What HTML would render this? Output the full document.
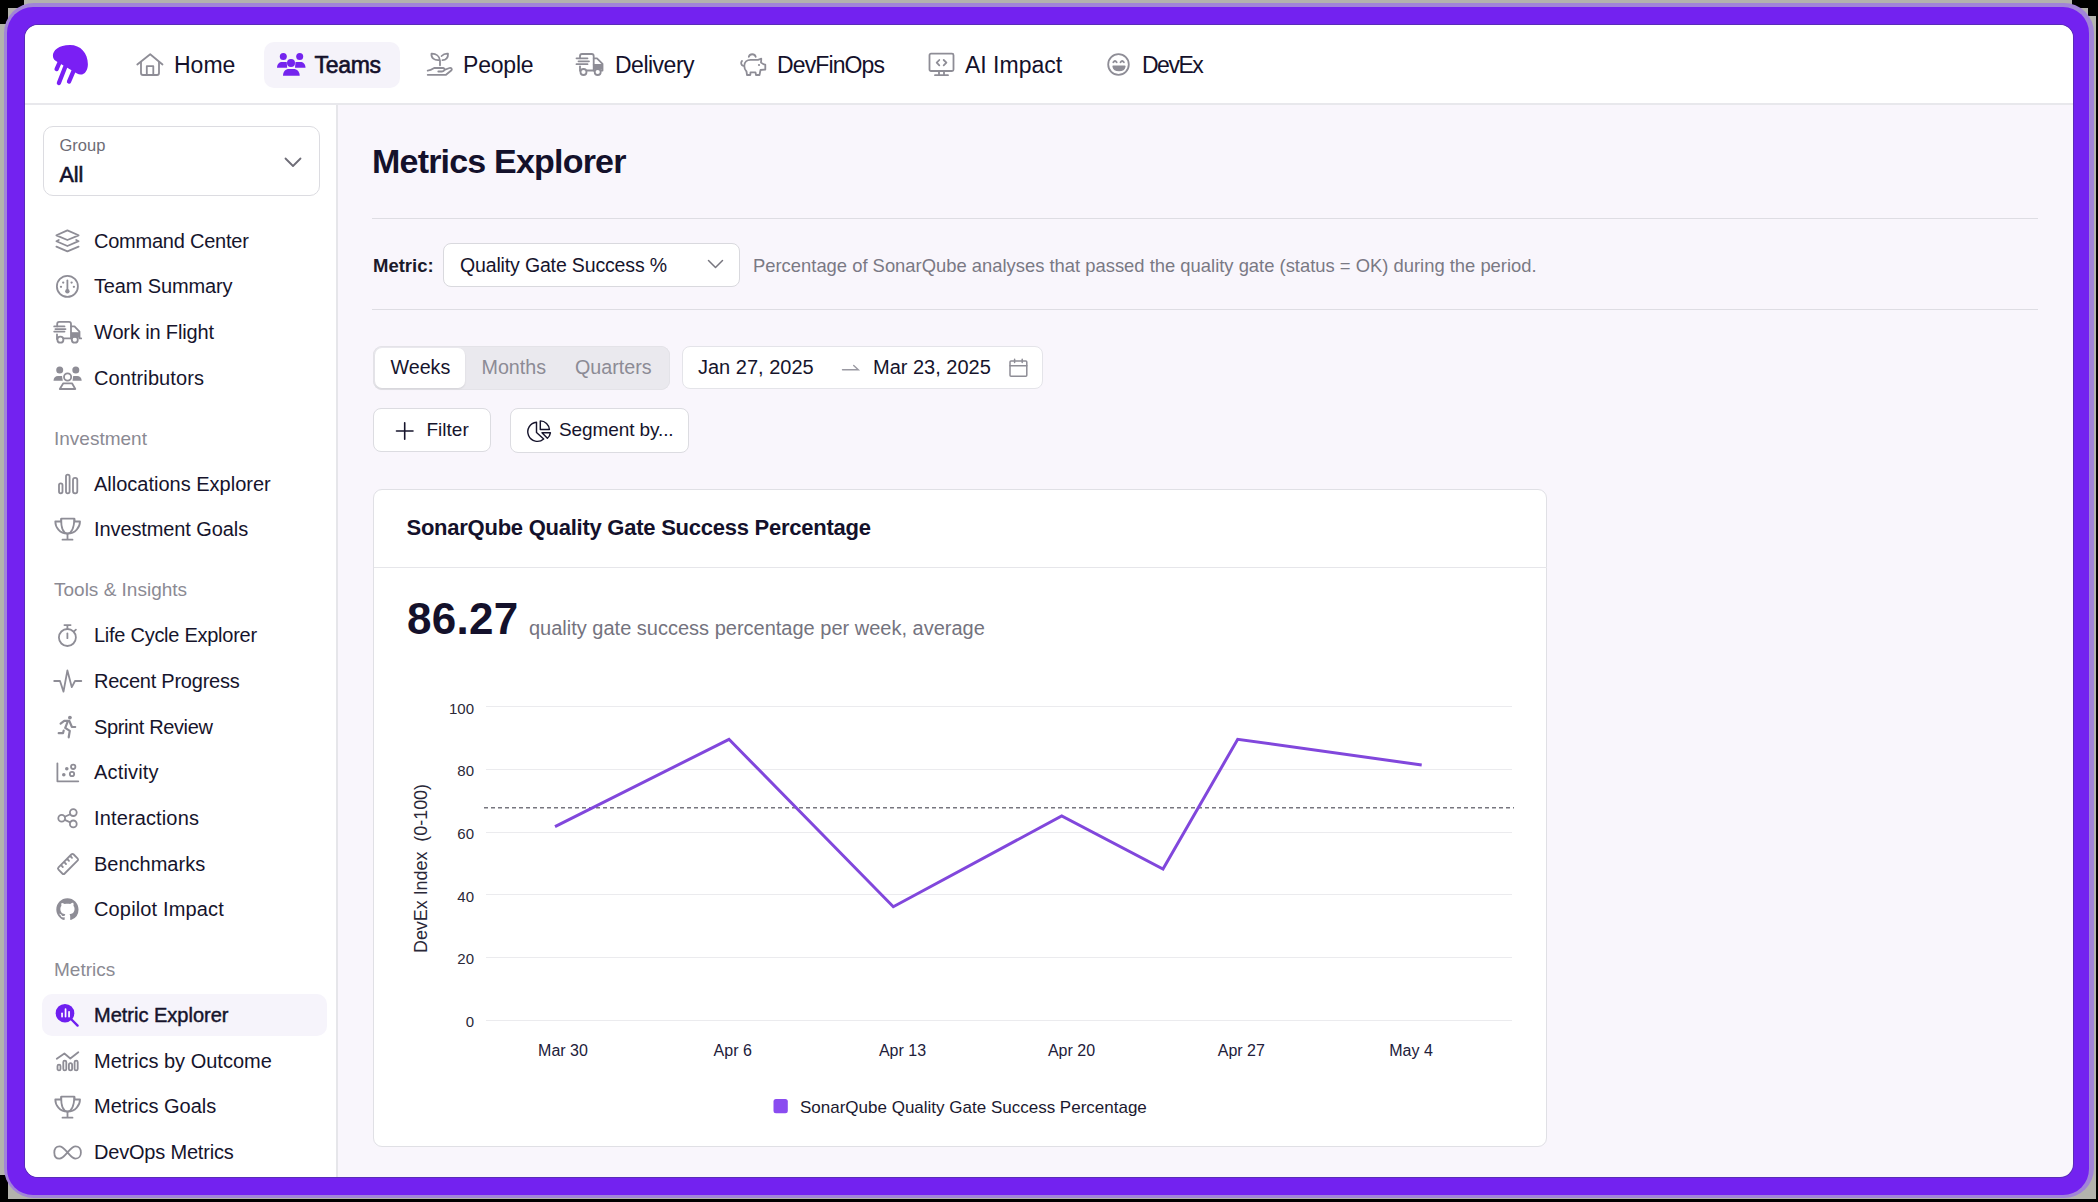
<!DOCTYPE html>
<html><head><meta charset="utf-8">
<style>
html,body{margin:0;padding:0}
body{width:2098px;height:1202px;position:relative;overflow:hidden;background:#b3b3ad;font-family:"Liberation Sans",sans-serif;color:#14112b}
.a{position:absolute}
.t{position:absolute;line-height:1;white-space:nowrap}
svg.i{position:absolute;overflow:visible}
.nav{font-size:23px;color:#14112b}
.si{font-size:20px;color:#16142c}
.sh{font-size:19px;color:#8b8a93}
.g{fill:none;stroke:#8e8d96;stroke-width:1.8;stroke-linecap:round;stroke-linejoin:round}
</style></head>
<body>
<!-- corners -->
<div class="a" style="left:0;top:0;width:24px;height:8px;background:#000"></div>
<div class="a" style="left:0;top:0;width:8px;height:24px;background:#000"></div>
<div class="a" style="left:2072px;top:0;width:26px;height:8px;background:#000"></div>
<div class="a" style="left:2088px;top:0;width:10px;height:16px;background:#000"></div>
<div class="a" style="left:0;top:1175px;width:8px;height:27px;background:#000"></div>
<div class="a" style="left:0;top:1199px;width:2098px;height:3px;background:#000"></div>
<!-- frame -->
<div class="a" style="left:2096px;top:0;width:2px;height:1202px;background:#000"></div>
<div class="a" style="left:4px;top:2.5px;width:2090px;height:1195.5px;background:#a184d8;border-radius:30px"></div>
<div class="a" style="left:7px;top:6.5px;width:2082px;height:1188.5px;background:#7322f0;border-radius:26px"></div>
<!-- panel -->
<div class="a" id="panel" style="left:25px;top:25px;width:2048px;height:1152px;background:#f9f6fc;border-radius:13px;overflow:hidden;box-shadow:0 0 0 1px #5a2cb8">
  <div class="a" style="left:0;top:0;width:2048px;height:78px;background:#fff;border-bottom:2px solid #e8e8ec"></div>
  <div class="a" style="left:0;top:80px;width:311px;height:1072px;background:#fff;border-right:2px solid #e6e6ea"></div>
</div>

<!-- HEADER -->
<div class="a" style="left:264px;top:42px;width:136px;height:46px;background:#f5f3fa;border-radius:10px"></div>
<div class="t nav" style="left:174px;top:54px">Home</div>
<div class="t nav" style="left:314.5px;top:54px;-webkit-text-stroke:0.6px #14112b;letter-spacing:-0.3px">Teams</div>
<div class="t nav" style="left:463px;top:54px;letter-spacing:-0.2px">People</div>
<div class="t nav" style="left:615px;top:54px;letter-spacing:-0.5px">Delivery</div>
<div class="t nav" style="left:777px;top:54px;letter-spacing:-0.88px">DevFinOps</div>
<div class="t nav" style="left:965px;top:54px">AI Impact</div>
<div class="t nav" style="left:1142px;top:54px;letter-spacing:-1.5px">DevEx</div>

<!-- SIDEBAR -->
<div class="a" style="left:42.5px;top:126.3px;width:275.5px;height:67.4px;background:#fff;border:1.5px solid #dcdce1;border-radius:10px"></div>
<div class="t" style="left:59.5px;top:137.1px;font-size:16.5px;color:#6d6c76">Group</div>
<div class="t" style="left:59.5px;top:165.3px;font-size:21.5px;-webkit-text-stroke:0.6px #14112b;color:#14112b">All</div>

<div class="a" style="left:42px;top:994px;width:285px;height:42px;background:#f6f4fb;border-radius:10px"></div>
<div class="t si" style="left:94px;top:230.96px;letter-spacing:-0.231px">Command Center</div>
<div class="t si" style="left:94px;top:276.26px;letter-spacing:-0.136px">Team Summary</div>
<div class="t si" style="left:94px;top:321.96px;letter-spacing:-0.138px">Work in Flight</div>
<div class="t si" style="left:94px;top:368.06px;letter-spacing:0.091px">Contributors</div>
<div class="t sh" style="left:54px;top:429px">Investment</div>
<div class="t si" style="left:94px;top:473.66px">Allocations Explorer</div>
<div class="t si" style="left:94px;top:519.36px;letter-spacing:-0.100px">Investment Goals</div>
<div class="t sh" style="left:54px;top:580.4px">Tools &amp; Insights</div>
<div class="t si" style="left:94px;top:625.16px;letter-spacing:-0.267px">Life Cycle Explorer</div>
<div class="t si" style="left:94px;top:670.86px;letter-spacing:-0.229px">Recent Progress</div>
<div class="t si" style="left:94px;top:716.56px;letter-spacing:-0.375px">Sprint Review</div>
<div class="t si" style="left:94px;top:762.16px;letter-spacing:0.171px">Activity</div>
<div class="t si" style="left:94px;top:807.86px;letter-spacing:0.136px">Interactions</div>
<div class="t si" style="left:94px;top:853.56px">Benchmarks</div>
<div class="t si" style="left:94px;top:899.26px;letter-spacing:0.154px">Copilot Impact</div>
<div class="t sh" style="left:54px;top:960.3px">Metrics</div>
<div class="t si" style="left:94px;top:1004.86px;-webkit-text-stroke:0.45px #16142c">Metric Explorer</div>
<div class="t si" style="left:94px;top:1050.56px">Metrics by Outcome</div>
<div class="t si" style="left:94px;top:1096.26px">Metrics Goals</div>
<div class="t si" style="left:94px;top:1141.96px;letter-spacing:-0.192px">DevOps Metrics</div>

<!-- MAIN -->
<div class="t" style="left:372px;top:144px;font-size:34px;font-weight:bold;letter-spacing:-0.8px;color:#14112b">Metrics Explorer</div>
<div class="a" style="left:372px;top:218px;width:1666px;height:1px;background:#dedde3"></div>
<div class="t" style="left:373px;top:257.3px;font-size:18.5px;font-weight:bold;color:#1b1a2a">Metric:</div>
<div class="a" style="left:443.2px;top:242.6px;width:294.4px;height:42px;background:#fff;border:1.2px solid #d9d9de;border-radius:8px"></div>
<div class="t" style="left:460px;top:255.9px;font-size:19.5px;letter-spacing:-0.15px;color:#16142c">Quality Gate Success %</div>
<div class="t" style="left:753px;top:256.6px;font-size:18.4px;color:#7a7984">Percentage of SonarQube analyses that passed the quality gate (status = OK) during the period.</div>
<div class="a" style="left:372px;top:309px;width:1666px;height:1px;background:#dedde3"></div>

<div class="a" style="left:372.5px;top:345.5px;width:297px;height:44.5px;background:#eae9ee;border-radius:9px;box-shadow:inset 0 0 0 0.8px #e2e1e6"></div>
<div class="a" style="left:374.5px;top:348px;width:90px;height:39.5px;background:#fff;border-radius:7px;box-shadow:0 1px 2px rgba(0,0,0,.10)"></div>
<div class="t" style="left:390.5px;top:357.9px;font-size:19.7px;color:#16142c">Weeks</div>
<div class="t" style="left:481.5px;top:357.9px;font-size:19.7px;color:#8c8b95">Months</div>
<div class="t" style="left:575px;top:357.9px;font-size:19.7px;color:#8c8b95">Quarters</div>

<div class="a" style="left:682.3px;top:345.6px;width:359px;height:41.6px;background:#fff;border:1.2px solid #e4e4e9;border-radius:8px"></div>
<div class="t" style="left:698px;top:356.9px;font-size:20px;color:#16142c">Jan 27, 2025</div>
<div class="t" style="left:873px;top:356.9px;font-size:20px;color:#16142c">Mar 23, 2025</div>

<div class="a" style="left:372.5px;top:408.3px;width:116.8px;height:42px;background:#fff;border:1.2px solid #dcdce1;border-radius:8px"></div>
<div class="t" style="left:426.5px;top:420.3px;font-size:19px;color:#16142c">Filter</div>
<div class="a" style="left:510px;top:408.3px;width:177px;height:42.5px;background:#fff;border:1.2px solid #dcdce1;border-radius:8px"></div>
<div class="t" style="left:559px;top:420.3px;font-size:19px;letter-spacing:-0.1px;color:#16142c">Segment by...</div>

<!-- CARD -->
<div class="a" style="left:372.7px;top:489.3px;width:1172.2px;height:655.5px;background:#fff;border:1.2px solid #e0e0e5;border-radius:9px"></div>
<div class="a" style="left:373.5px;top:567px;width:1173px;height:1px;background:#e6e6ea"></div>
<div class="t" style="left:406.5px;top:516.5px;font-size:22px;font-weight:bold;letter-spacing:-0.25px;color:#14112b">SonarQube Quality Gate Success Percentage</div>
<div class="t" style="left:407px;top:596.9px;font-size:44px;font-weight:bold;letter-spacing:0.3px;color:#14112b">86.27</div>
<div class="t" style="left:529px;top:618px;font-size:20px;color:#74737e">quality gate success percentage per week, average</div>

<!-- CHART -->
<svg class="a" style="left:0;top:0" width="2098" height="1202" viewBox="0 0 2098 1202">
<path d="M486,706.5 H1512" stroke="#ebebee" stroke-width="1"/>
<path d="M486,769.5 H1512" stroke="#ebebee" stroke-width="1"/>
<path d="M486,832.5 H1512" stroke="#ebebee" stroke-width="1"/>
<path d="M486,894.5 H1512" stroke="#ebebee" stroke-width="1"/>
<path d="M486,957.5 H1512" stroke="#ebebee" stroke-width="1"/>
<path d="M486,1020.5 H1512" stroke="#ebebee" stroke-width="1"/>
<path d="M484,807.8 H1514" stroke="#77767f" stroke-width="1.5" stroke-dasharray="4 3"/>
<polyline points="555,826.7 729,739.3 893.3,906.7 1061.7,816 1163,869 1237.7,739.3 1421.7,765" fill="none" stroke="#8147dc" stroke-width="3" stroke-linejoin="miter" stroke-linecap="butt"/>
<g font-family="Liberation Sans" font-size="15" fill="#2a2838" text-anchor="end">
<text x="474" y="713.8">100</text>
<text x="474" y="776.4">80</text>
<text x="474" y="839.0">60</text>
<text x="474" y="901.6">40</text>
<text x="474" y="964.2">20</text>
<text x="474" y="1026.8">0</text>
</g>
<g font-family="Liberation Sans" font-size="16" fill="#22203a" text-anchor="middle">
<text x="563" y="1056">Mar 30</text>
<text x="732.7" y="1056">Apr 6</text>
<text x="902.5" y="1056">Apr 13</text>
<text x="1071.5" y="1056">Apr 20</text>
<text x="1241.3" y="1056">Apr 27</text>
<text x="1411" y="1056">May 4</text>
</g>
<text transform="translate(427.3,868.5) rotate(-90)" font-family="Liberation Sans" font-size="17.9" fill="#2a2838" text-anchor="middle" xml:space="preserve">DevEx Index  (0-100)</text>
<rect x="773.5" y="1099" width="14.3" height="14.3" rx="2.5" fill="#8a4cf0"/>
<text x="800" y="1112.9" font-family="Liberation Sans" font-size="17" fill="#1b1930">SonarQube Quality Gate Success Percentage</text>
</svg>
<!-- ICONS + CHART overlay -->
<svg class="a" style="left:0;top:0" width="2098" height="1202" viewBox="0 0 2098 1202">

<!-- logo -->
<g transform="translate(45,40)" fill="#7a1ff4">
  <path d="M12.5,22 C9.5,20.6 7.9,19 7.9,15.8 C7.9,10.5 13.5,5.2 25,5 C35.5,5 42.9,13 42.9,24.2 C42.9,30 40,34.6 35.6,34.6 C34.3,34.6 33.2,34.2 32,33.6 Z"/>
  <g stroke="#7a1ff4" stroke-width="4.3" stroke-linecap="round" fill="none">
    <path d="M14.3,23 L11.6,29.1"/><path d="M20.6,26 L13.9,43"/><path d="M28.6,30.8 L24,41.6"/>
  </g>
</g>
<!-- home -->
<g transform="translate(130,45)" class="g">
  <path d="M7.3,19.5 L20.2,9.2 L32.5,19.5"/>
  <path d="M11,17 V28 Q11,30 13,30 H27 Q29,30 29,28 V17"/>
  <path d="M16.8,30 V21.2 H23.3 V30"/>
</g>
<!-- teams -->
<g transform="translate(271,45)" fill="#7424ee">
  <circle cx="12.3" cy="11.6" r="3.5"/><circle cx="28.7" cy="11.6" r="3.5"/><circle cx="20" cy="17.9" r="4"/>
  <path d="M6,22.7 C6,19 8.5,17 11,17 H15.7 L16.2,22.7 Z"/>
  <path d="M34.5,22.7 C34.5,19 32,17 29.5,17 H24.5 L24,22.7 Z"/>
  <path d="M12,30.8 C12,26.5 14.5,24 18,24 H22.5 C26,24 28.7,26.5 28.7,30.8 Z"/>
</g>
<!-- people (plant in hand) -->
<g transform="translate(420,45)" class="g">
  <path d="M20,20.3 V15.5 C19.5,11 16,8.5 11.5,8.7 C11,13 14,15.5 19.6,15"/>
  <path d="M21.6,11 C23.5,9 26,8.5 28,8.7 C28.3,12.5 26,15 22.5,15.2"/>
  <path d="M7.7,25.7 C10.5,25.5 12,24.5 14.3,23 H23 C24,23 24.8,23.8 24.5,24.8 C24.2,25.7 23,26.5 22,26.5 H18.3"/>
  <path d="M24.5,24.8 L29.5,23 C31,22.5 32.5,23.8 31.5,25.3 L26,29.8 H7.7"/>
</g>
<!-- delivery truck (header) -->
<g transform="translate(570,45)" class="g">
  <path d="M10,13.3 V11 Q10,9 12,9 H21.7 Q23.7,9 23.7,11 V25.5"/>
  <path d="M23.7,13.3 H27 L32.5,18.8 V25.5 H31"/>
  <path d="M10,21.3 V25.8"/>
  <path d="M6.5,13.3 H17.5 M8.5,16.3 H19 M6.5,19.2 H17.5"/>
  <path d="M16.8,25.5 H24.4"/>
  <circle cx="13.5" cy="27" r="3"/><circle cx="27.7" cy="27" r="3"/>
  <path d="M23.7,19.8 H32" />
  <rect x="23.7" y="19.5" width="8.5" height="5" fill="#8e8d96" stroke="none"/>
</g>
<!-- piggy -->
<g transform="translate(733,45)" class="g">
  <path d="M15.8,11.8 A3.6,3.6 0 0 1 22.7,11.8"/>
  <path d="M10.3,20.8 C8,20 7.5,17.5 9,16"/>
  <path d="M11.3,21 C11.3,17 14,14.8 17.5,14.8 H25 L28.3,13.7 L28,17.5 C29.5,18.5 30.5,19.5 32.3,19.7 V24.5 L27.5,25 L26.5,30 H23 L22.5,27.3 H17.5 L17.3,30 H14 L13.5,26.5 C12,25 11.3,23 11.3,21 Z"/>
  <circle cx="26" cy="20" r="1.1" fill="#8e8d96" stroke="none"/>
</g>
<!-- monitor code -->
<g transform="translate(921,45)" class="g">
  <rect x="8.5" y="8.7" width="24" height="17.3" rx="1.5"/>
  <path d="M18,26 V29.8 M23,26 V29.8 M14,30.2 H27"/>
  <path d="M18.3,15 L15.7,17.7 L18.3,20.3 M22.7,15 L25.4,17.7 L22.7,20.3"/>
</g>
<!-- smiley -->
<g transform="translate(1099,45)" class="g">
  <circle cx="19.5" cy="19.5" r="10.3"/>
  <path d="M14.3,17.2 Q16,14.8 17.7,17.2 M21.5,17.2 Q23.2,14.8 24.9,17.2"/>
  <path d="M14.3,21.5 H25.7 Q25,25.3 20,25.3 Q15,25.3 14.3,21.5 Z" fill="#8e8d96"/>
</g>

<!-- SIDEBAR ICONS -->
<!-- group chevron -->
<path d="M285.5,158.5 L293,166 L300.5,158.5" class="g" style="stroke:#6e6d77"/>
<!-- stack -->
<g transform="translate(50,225)" class="g">
  <path d="M17.4,5.4 L28.6,10.3 L17.4,15 L6.4,10.3 Z"/>
  <path d="M8.8,15 L6.4,16.2 L17.4,21 L28.6,16.2 L26.2,15"/>
  <path d="M6.4,21.6 L17.4,26.3 L28.6,21.6"/>
</g>
<!-- gauge -->
<g transform="translate(50,270)" class="g">
  <circle cx="17.4" cy="16.4" r="10.5"/>
  <path d="M17.4,10.5 V20"/>
  <circle cx="17.4" cy="21.2" r="2.2" fill="#8e8d96" stroke="none"/>
  <g fill="#8e8d96" stroke="none"><circle cx="13.2" cy="12.6" r="1.15"/><circle cx="21.6" cy="12.6" r="1.15"/><circle cx="11" cy="16.8" r="1.15"/><circle cx="23.9" cy="16.8" r="1.15"/></g>
</g>
<!-- truck sidebar -->
<g transform="translate(50,315)" class="g">
  <path d="M7.2,11.4 V9 Q7.2,6.9 9.2,6.9 H19 Q21,6.9 21,9 V23.4"/>
  <path d="M21,11.3 H24.5 L29.5,16.6 V23.4 H31.2"/>
  <path d="M7,19.5 V24"/>
  <path d="M4.2,11.4 H14.5 M5.4,14.1 H15.5 M4.2,16.6 H14.5"/>
  <path d="M13.5,23.4 H21.3"/>
  <circle cx="10.4" cy="24.7" r="3"/><circle cx="24.8" cy="24.7" r="3"/>
  <rect x="21" y="17.2" width="8.5" height="5.5" fill="#8e8d96" stroke="none"/>
</g>
<!-- contributors -->
<g transform="translate(50,361)">
  <g fill="#8e8d96"><circle cx="9.7" cy="9" r="3.5"/><circle cx="25.8" cy="9" r="3.5"/>
  <path d="M3.5,19.8 C3.5,16.5 5.5,15 8,15 H12 L12.8,19.8 Z"/><path d="M31.7,19.8 C31.7,16.5 29.7,15 27.2,15 H23.2 L22.5,19.8 Z"/></g>
  <g class="g"><circle cx="17.6" cy="16" r="3.6"/><path d="M13.3,22.3 H22 L25.3,28 H9.8 Z"/></g>
</g>
<!-- allocations bars -->
<g transform="translate(50,466)" class="g">
  <rect x="9" y="17.3" width="3.5" height="10" rx="1.7"/>
  <rect x="16" y="8.7" width="3.6" height="18.6" rx="1.8"/>
  <rect x="23" y="11.9" width="4.3" height="15.4" rx="2"/>
</g>
<!-- investment goals trophy -->
<g transform="translate(50,512)" class="g">
  <path d="M11.4,6.6 H24.3 L24.6,9.5 H30 C30,15 25.5,21.7 17.5,21.7 C9.5,21.7 5.3,15 5.3,9.5 H11 Z" />
  <path d="M11.2,7 C11,16 13,21 17.5,21.7 C22,21 24,16 24.4,7" />
  <path d="M17.5,21.7 V27.7 M12.5,27.7 H22.5" />
</g>
<!-- timer -->
<g transform="translate(50,618)" class="g">
  <circle cx="17.4" cy="19.5" r="8.5"/>
  <path d="M17.4,7.1 V11 M14.4,7.1 H20.6 M24.3,13.2 L25.9,11.7"/>
  <path d="M17.4,15.5 V20.2"/>
</g>
<!-- pulse -->
<path transform="translate(50,663)" class="g" d="M4.2,18 H10 L13.5,28.6 L17.4,7.5 L21.8,24.2 L25,18 H31.3"/>
<!-- runner -->
<g transform="translate(50,709)">
  <circle cx="19.9" cy="8.6" r="1.9" fill="#8e8d96"/>
  <g class="g" style="stroke-width:2.2"><path d="M10.6,14.6 L14.2,11.9 H19.3 L21.8,17.8 L25.2,18"/>
  <path d="M17.8,12.3 L15.2,18.8 L19.8,21.8 L18.7,28.3"/>
  <path d="M13.7,21.5 L13,24.2 H8.7"/></g>
</g>
<!-- activity scatter -->
<g transform="translate(50,755)">
  <path class="g" d="M7.4,8.3 V26.3 H28.3"/>
  <g fill="#8e8d96"><circle cx="16.8" cy="13.8" r="1.8"/><circle cx="13.8" cy="19.7" r="1.8"/></g>
  <g class="g"><circle cx="23.2" cy="11.8" r="2.2"/><circle cx="22" cy="19" r="2.2"/></g>
</g>
<!-- interactions -->
<g transform="translate(50,800)" class="g">
  <circle cx="11.7" cy="18.3" r="3.4"/><circle cx="23.3" cy="12.6" r="3.4"/><circle cx="23.3" cy="23.9" r="3.4"/>
  <path d="M14.7,16.7 L20.3,14.2 M14.7,19.9 L20.3,22.3"/>
</g>
<!-- ruler -->
<g transform="translate(50,846)" class="g">
  <path d="M21.3,8.5 Q22.5,7.3 23.7,8.5 L27.5,12.3 Q28.7,13.5 27.5,14.7 L14.7,27.5 Q13.5,28.7 12.3,27.5 L8.5,23.7 Q7.3,22.5 8.5,21.3 Z"/>
  <path d="M11.5,19.7 L12.8,21 M14.7,16.7 L16,18 M17.7,13.5 L19,14.8 M20.7,10.5 L22,11.8"/>
</g>
<!-- github -->
<g transform="translate(50,892)">
  <path fill="#8e8d96" transform="translate(6.3,6.3) scale(1.39)" d="M8 0C3.58 0 0 3.58 0 8c0 3.54 2.29 6.53 5.47 7.59.4.07.55-.17.55-.38 0-.19-.01-.82-.01-1.49-2.01.37-2.53-.49-2.69-.94-.09-.23-.48-.94-.82-1.13-.28-.15-.68-.52-.01-.53.63-.01 1.08.58 1.23.82.72 1.21 1.87.87 2.33.66.07-.52.28-.87.51-1.07-1.78-.2-3.64-.89-3.64-3.95 0-.87.31-1.59.82-2.15-.08-.2-.36-1.02.08-2.12 0 0 .67-.21 2.2.82.64-.18 1.320-.27 2-.27.68 0 1.36.09 2 .27 1.53-1.04 2.2-.82 2.2-.82.44 1.1.16 1.92.08 2.12.51.56.82 1.27.82 2.150 0 3.07-1.87 3.75-3.65 3.95.29.25.54.73.54 1.48 0 1.07-.01 1.93-.01 2.2 0 .21.15.46.55.38A8.013 8.013 0 0016 8c0-4.42-3.58-8-8-8z"/>
</g>
<!-- metric explorer magnifier -->
<g transform="translate(50,997)">
  <circle cx="15" cy="16.2" r="9.3" fill="#6f1ff0"/>
  <path d="M21.5,22.5 L27.6,28.6" stroke="#6f1ff0" stroke-width="2.4" stroke-linecap="round"/>
  <g fill="#fff"><rect x="11.2" y="15.4" width="1.7" height="5.2" rx=".8"/><rect x="14.7" y="11.3" width="1.7" height="9.3" rx=".8"/><rect x="18.2" y="14" width="1.7" height="6.6" rx=".8"/></g>
</g>
<!-- metrics by outcome -->
<g transform="translate(50,1043)" class="g">
  <path d="M6.8,15.8 L14.4,10.5 L20.3,15.5 L28.3,9.2"/>
  <rect x="7.5" y="21.6" width="3" height="5.8" rx="1.5"/>
  <rect x="13.3" y="17.6" width="3" height="9.8" rx="1.5"/>
  <rect x="18.9" y="20.1" width="3.2" height="7.3" rx="1.6"/>
  <rect x="24.6" y="17.6" width="3.1" height="9.8" rx="1.5"/>
</g>
<g transform="translate(50,1090)" class="g">
  <path d="M11.4,6.6 H24.3 L24.6,9.5 H30 C30,15 25.5,21.7 17.5,21.7 C9.5,21.7 5.3,15 5.3,9.5 H11 Z" />
  <path d="M11.2,7 C11,16 13,21 17.5,21.7 C22,21 24,16 24.4,7" />
  <path d="M17.5,21.7 V27.7 M12.5,27.7 H22.5" />
</g>
<!-- infinity -->
<path transform="translate(50,1134)" class="g" d="M17.5,18.4 C14.5,15 12.5,12.3 9.5,12.3 C6,12.3 4.3,15 4.3,18.4 C4.3,21.8 6,24.6 9.5,24.6 C12.5,24.6 14.5,21.8 17.5,18.4 C20.5,15 22.5,12.3 25.5,12.3 C29,12.3 30.9,15 30.9,18.4 C30.9,21.8 29,24.6 25.5,24.6 C22.5,24.6 20.5,21.8 17.5,18.4 Z"/>

<!-- MAIN ICONS -->
<path d="M708.5,260.5 L715.5,267.5 L722.5,260.5" class="g" style="stroke:#77767f;stroke-width:1.5"/>
<g transform="translate(830,350)" style="fill:none;stroke:#9a99a2;stroke-width:1.4;stroke-linecap:round">
  <path d="M12.5,19.7 H28.3 L23.7,15.4"/>
</g>
<g transform="translate(1000,350)" style="fill:none;stroke:#8e8d96;stroke-width:1.5;stroke-linecap:round">
  <rect x="10" y="10.9" width="16.8" height="15.3" rx="1"/>
  <path d="M10,15.7 H26.8 M14.6,9.3 V12.5 M22.2,9.3 V12.5"/>
</g>
<path d="M396.5,431 H413 M404.7,422.8 V439.2" style="fill:none;stroke:#16142c;stroke-width:1.6;stroke-linecap:round"/>
<g transform="translate(520,412)" style="fill:none;stroke:#16142c;stroke-width:1.45;stroke-linejoin:round">
  <path d="M16.5,10.2 V20.5 L23.7,27 A9.6,9.6 0 1 1 16.5,10.2 Z"/>
  <path d="M20.3,8.9 V17.5 H29.4 A9.2,9.2 0 0 0 20.3,8.9 Z"/>
  <path d="M22,20.8 H30.4 A9.2,9.2 0 0 1 27.4,26.3 Z"/>
</g>
</svg>

</body></html>
